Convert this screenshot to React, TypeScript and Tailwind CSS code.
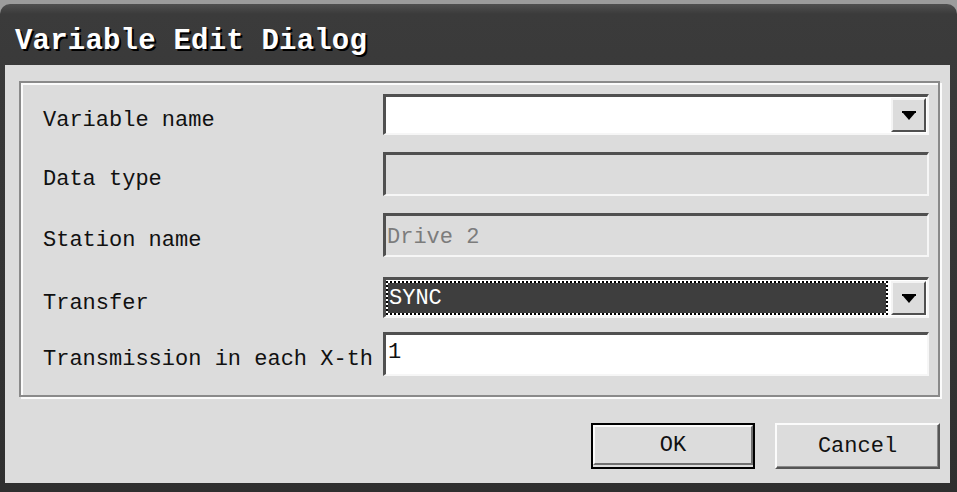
import { ReactNode } from "react";

const mono = "font-['Liberation_Mono','DejaVu_Sans_Mono',monospace]";

function Sunken({ children, className = "" }: { children?: ReactNode; className?: string }) {
    return (
        <div
            className={`flex w-[546px] items-stretch border-t-[3px] border-l-[3px] border-r-2 border-b-2 border-t-[#505050] border-l-[#505050] border-r-[#f6f6f6] border-b-[#f6f6f6] ${className}`}
        >
            {children}
        </div>
    );
}

function ArrowButton() {
    return (
        <div className="my-[1px] mr-[1px] flex w-[35px] items-center justify-center border-2 border-t-[#f4f4f4] border-l-[#f4f4f4] border-r-[#505050] border-b-[#505050] bg-[#dcdcdc]">
            <svg width="14" height="9" viewBox="0 0 14 9">
                <rect x="0" y="0" width="14" height="2" fill="#000" />
                <polygon points="1,2 13,2 7,9" fill="#000" />
            </svg>
        </div>
    );
}

function Row({ label, children, className = "" }: { label: string; children: ReactNode; className?: string }) {
    return (
        <div className={`flex items-center ${className}`}>
            <div className="w-[362px] pl-[22px] pt-[12px] text-[22px] leading-none text-[#111] whitespace-nowrap">{label}</div>
            {children}
        </div>
    );
}

export default function App() {
    return (
        <div className={`h-[492px] w-[957px] overflow-hidden bg-[#9c9c9c] pt-[4px] ${mono}`}>
            <div className="flex h-[488px] flex-col rounded-t-[10px] bg-[linear-gradient(#505050,#3b3b3b_10px,#3a3a3a_50px,#2f2f2f)]">
                {/* title bar */}
                <div className="flex h-[61px] items-center pl-[15px] pt-[14px]">
                    <span className="text-[29px] font-bold leading-none tracking-[0.2px] text-white [text-shadow:2px_2px_0_#000]">
                        Variable Edit Dialog
                    </span>
                </div>

                {/* client area */}
                <div className="mb-[9px] ml-[5px] mr-[7px] flex flex-1 flex-col bg-[#dcdcdc] pl-[14px] pr-[10px] pt-[16px]">
                    <div className="flex h-[316px] flex-col border-2 border-[#8a8a8a] shadow-[inset_2px_2px_0_#fbfbfb,2px_2px_0_#fbfbfb] pt-[11px]">
                        <Row label="Variable name">
                            <Sunken className="h-[41px] bg-white">
                                <div className="flex-1" />
                                <ArrowButton />
                            </Sunken>
                        </Row>

                        <Row label="Data type" className="mt-[17px]">
                            <Sunken className="h-[44px] bg-[#dcdcdc]" />
                        </Row>

                        <Row label="Station name" className="mt-[17px]">
                            <Sunken className="h-[44px] bg-[#dcdcdc]">
                                <div className="flex items-center pl-[1px] pt-[5px] text-[22px] leading-none text-[#7c7c7c]">Drive 2</div>
                            </Sunken>
                        </Row>

                        <Row label="Transfer" className="mt-[20px]">
                            <Sunken className="h-[41px] bg-white">
                                <div className="flex flex-1 py-[1px] pr-[3px]">
                                    <div className="flex flex-1 items-center border-2 border-dotted border-black bg-[#3e3e3e] bg-clip-padding pl-[1px] pt-[2px] text-[22px] leading-none text-white">
                                        SYNC
                                    </div>
                                </div>
                                <ArrowButton />
                            </Sunken>
                        </Row>

                        <Row label="Transmission in each X-th" className="mt-[14px]">
                            <Sunken className="h-[44px] bg-white">
                                <div className="pl-[2px] pt-[7px] text-[22px] leading-none text-[#111]">1</div>
                            </Sunken>
                        </Row>
                    </div>

                    {/* buttons */}
                    <div className="mt-[26px] flex justify-end gap-[20px]">
                        <div className="border-2 border-black">
                            <div className="flex h-[40px] w-[160px] items-center justify-center border-2 border-t-[#fbfbfb] border-l-[#fbfbfb] border-r-[#707070] border-b-[#707070] bg-[#dcdcdc] text-[22px] text-[#111]">
                                OK
                            </div>
                        </div>
                        <div className="flex h-[46px] w-[165px] items-center justify-center border-2 border-t-[#fbfbfb] border-l-[#fbfbfb] border-r-[#555] border-b-[#555] bg-[#dcdcdc] text-[22px] text-[#111] shadow-[inset_-1px_-1px_0_#8a8a8a]">
                            Cancel
                        </div>
                    </div>
                </div>
            </div>
        </div>
    );
}
